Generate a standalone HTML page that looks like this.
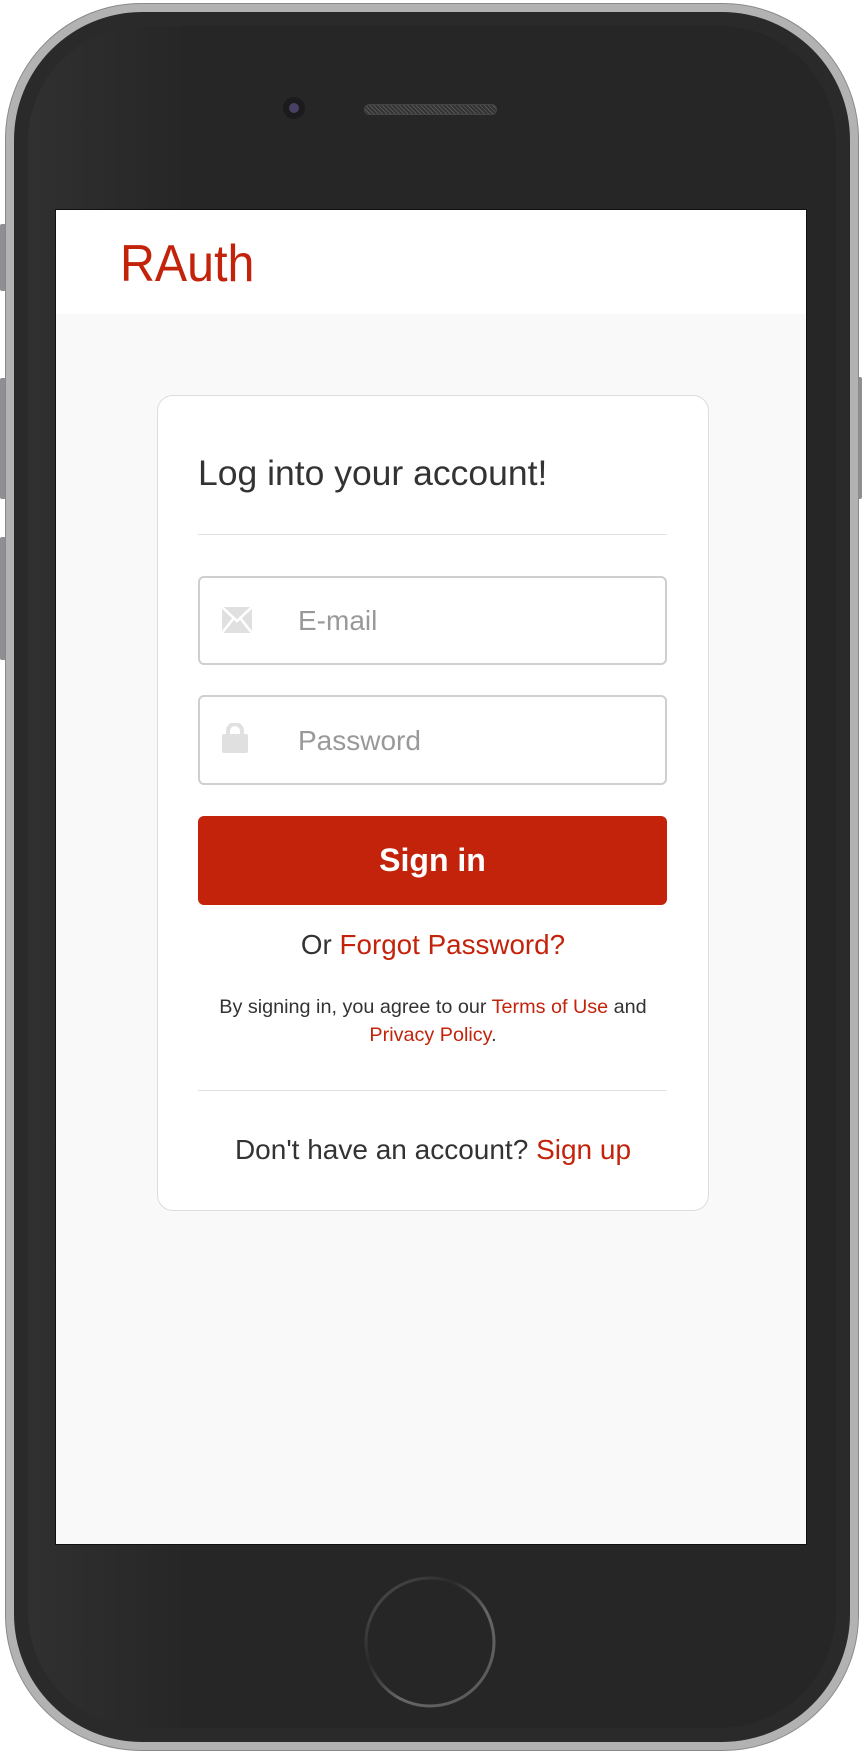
<!DOCTYPE html>
<html><head><meta charset="utf-8"><style>
*{margin:0;padding:0;box-sizing:border-box}
html,body{width:862px;height:1754px;background:#fff;overflow:hidden;font-family:"Liberation Sans",Arial,sans-serif}
.abs{position:absolute}
.btn{position:absolute;background:#8e8e93;border-radius:2px}
</style></head><body>
<div class="btn" style="left:0;top:224px;width:8px;height:67px"></div>
<div class="btn" style="left:0;top:378px;width:8px;height:121px"></div>
<div class="btn" style="left:0;top:537px;width:8px;height:123px"></div>
<div class="btn" style="left:854px;top:377px;width:8px;height:122px"></div>
<div class="abs" style="left:5px;top:3px;width:854px;height:1748px;border-radius:136px;background:#b2b2b2;border:1px solid #8a8a8a"></div>
<div class="abs" style="left:14px;top:12px;width:836px;height:1730px;border-radius:128px;background:#2a2a2a"></div>
<div class="abs" style="left:28px;top:26px;width:808px;height:1702px;border-radius:116px;background:linear-gradient(90deg,#303030,#262626 20%,#262626)"></div>
<div class="abs" style="left:283px;top:97px;width:22px;height:22px;border-radius:50%;background:#1b1b1b"></div>
<div class="abs" style="left:289px;top:103px;width:10px;height:10px;border-radius:50%;background:#4a4066"></div>
<div class="abs" style="left:364px;top:104px;width:133px;height:11px;border-radius:6px;background:repeating-linear-gradient(45deg,#555 0 1px,#333 1px 3px);border:1px solid #444"></div>
<svg class="abs" style="left:360px;top:1572px" width="140" height="140"><defs><linearGradient id="g" x1="0" y1="0" x2="1" y2="1"><stop offset="0" stop-color="#555"/><stop offset=".35" stop-color="#2a2a2a"/><stop offset=".6" stop-color="#666"/><stop offset="1" stop-color="#555"/></linearGradient></defs><circle cx="70" cy="70" r="64" fill="none" stroke="url(#g)" stroke-width="3"/></svg>
<div class="abs" style="left:55px;top:209px;width:752px;height:1336px;background:#f9f9f9;border:1px solid #111">
 <div class="abs" style="left:0;top:0;width:750px;height:104px;background:#fff"></div>
 <div class="abs" style="left:64px;top:24px;font-size:52px;color:#c4230b;line-height:60px;transform:scaleX(0.93);transform-origin:left">RAuth</div>
 <div class="abs" style="left:101px;top:185px;width:552px;height:816px;background:#fff;border:1px solid #ddd;border-radius:16px">
  <div class="abs" style="left:40px;top:57px;font-size:35.5px;color:#333;line-height:40px">Log into your account!</div>
  <div class="abs" style="left:40px;top:138px;width:469px;height:1px;background:#e2e2e2"></div>
  <div class="abs" style="left:40px;top:180px;width:469px;height:89px;border:2px solid #cfcfcf;border-radius:6px">
   <svg class="abs" style="left:22px;top:29px" width="30" height="26" viewBox="0 0 30 26"><path d="M0 0H30V26H0Z" fill="#e0e0e0"/><path d="M0 0L15 14L30 0M0 26L11 12M30 26L19 12" stroke="#fff" stroke-width="2.5" fill="none"/></svg>
   <div class="abs" style="left:98px;top:25px;font-size:28px;color:#999;line-height:36px">E-mail</div>
  </div>
  <div class="abs" style="left:40px;top:299px;width:469px;height:90px;border:2px solid #cfcfcf;border-radius:6px">
   <svg class="abs" style="left:22px;top:26px" width="26" height="30" viewBox="0 0 26 30"><path d="M6 12V8a7 7 0 0 1 14 0v4" stroke="#e0e0e0" stroke-width="4" fill="none"/><rect x="0" y="11" width="26" height="19" rx="2" fill="#e0e0e0"/></svg>
   <div class="abs" style="left:98px;top:26px;font-size:28px;color:#999;line-height:36px">Password</div>
  </div>
  <div class="abs" style="left:40px;top:420px;width:469px;height:89px;background:#c4230b;border-radius:6px;color:#fff;font-weight:bold;font-size:32px;text-align:center;line-height:89px">Sign in</div>
  <div class="abs" style="left:0;top:532px;width:550px;text-align:center;font-size:27.8px;color:#333;line-height:34px">Or <span style="color:#c4230b">Forgot Password?</span></div>
  <div class="abs" style="left:20px;top:597px;width:510px;text-align:center;font-size:19.8px;color:#333;line-height:28px">By signing in, you agree to our <span style="color:#c4230b">Terms of Use</span> and<br><span style="color:#c4230b">Privacy Policy</span>.</div>
  <div class="abs" style="left:40px;top:694px;width:469px;height:1px;background:#e2e2e2"></div>
  <div class="abs" style="left:0;top:737px;width:550px;text-align:center;font-size:28px;color:#333;line-height:34px">Don't have an account? <span style="color:#c4230b">Sign up</span></div>
 </div>
</div>
</body></html>
